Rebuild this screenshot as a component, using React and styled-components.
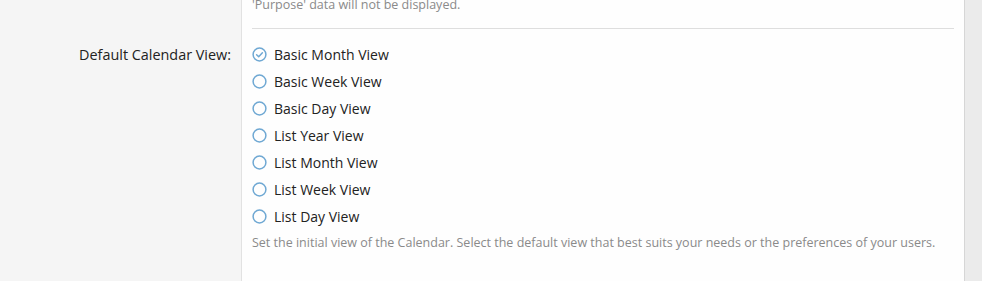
import React, { useState } from "react";
import styled, { createGlobalStyle } from "styled-components";

const views = [
	"Basic Month View",
	"Basic Week View",
	"Basic Day View",
	"List Year View",
	"List Month View",
	"List Week View",
	"List Day View",
];

const GlobalStyle = createGlobalStyle`
	html, body {
		margin: 0;
		padding: 0;
		background: #f5f5f5;
	}
	body {
		font-family: "Open Sans", "Noto Sans", sans-serif;
	}
`;

const Page = styled.div`
	display: flex;
	width: 982px;
	height: 281px;
	overflow: hidden;
	background: #f5f5f5;
`;

const Form = styled.div`
	flex: 1;
	display: flex;
	flex-direction: column;
`;

const Row = styled.div`
	display: flex;
	flex: ${(p) => (p.$grow ? 1 : "none")};
`;

const Label = styled.div`
	width: 231px;
	padding-right: 10px;
	padding-top: ${(p) => p.$top || 0}px;
	text-align: right;
	font-size: 14.4px;
	line-height: 19px;
	color: #222;
`;

const Field = styled.div`
	flex: 1;
	background: #fefefe;
	border-left: 1px solid #e2e2e2;
	padding: 0 10px;
`;

const FieldInner = styled.div`
	border-bottom: 1px solid #dedede;
	padding-bottom: 15px;
`;

const Hint = styled.p`
	margin: ${(p) => p.$top || 0}px 0 0;
	font-size: 12.5px;
	line-height: 16px;
	color: #8a8a8a;
	white-space: nowrap;
`;

const Options = styled.div`
	display: flex;
	flex-direction: column;
	gap: 8px;
	padding-top: 16px;
`;

const Option = styled.label`
	display: flex;
	align-items: center;
	gap: 7px;
	height: 19px;
	font-size: 14px;
	color: #222;
	cursor: pointer;
`;

const Scroll = styled.div`
	width: 17px;
	background: #ebebeb;
	border-left: 1px solid #d6d6d6;
`;

const Radio = ({ checked }) => (
	<svg width="15" height="15" viewBox="0 0 15 15">
		<circle cx="7.5" cy="7.5" r="6.4" fill="none" stroke="#6fa8d3" strokeWidth="1.5" />
		{checked && (
			<path d="M4.6 7.7 L6.7 9.7 L10.4 5.7" fill="none" stroke="#6fa8d3" strokeWidth="1.5" strokeLinecap="round" strokeLinejoin="round" />
		)}
	</svg>
);

export default function App() {
	const [view, setView] = useState(views[0]);

	return (
		<Page>
			<GlobalStyle />
			<Form>
				<Row>
					<Label />
					<Field>
						<FieldInner>
							<Hint $top={-3}>'Purpose' data will not be displayed.</Hint>
						</FieldInner>
					</Field>
				</Row>
				<Row $grow>
					<Label $top={16}>Default Calendar View:</Label>
					<Field>
						<Options>
							{views.map((v) => (
								<Option key={v} onClick={() => setView(v)}>
									<Radio checked={view === v} />
									{v}
								</Option>
							))}
						</Options>
						<Hint $top={9}>
							Set the initial view of the Calendar. Select the default view that best suits your needs or the preferences of your users.
						</Hint>
					</Field>
				</Row>
			</Form>
			<Scroll />
		</Page>
	);
}
